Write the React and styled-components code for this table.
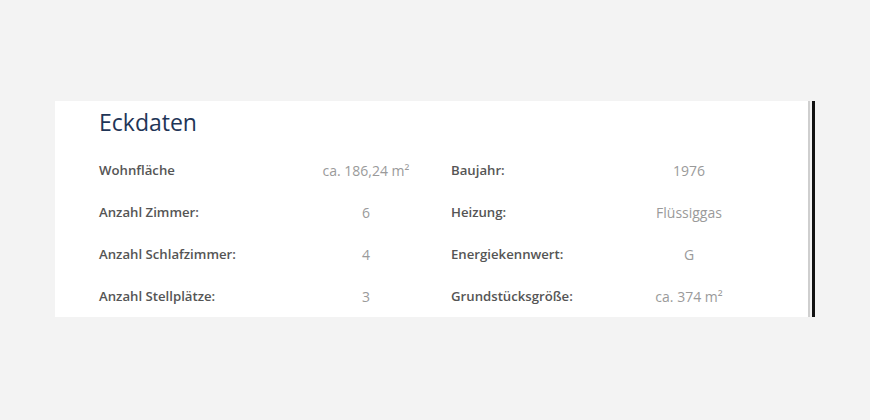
import React from "react";
import styled, { createGlobalStyle } from "styled-components";

const Global = createGlobalStyle`
  html, body { margin: 0; padding: 0; background: #f3f3f3; }
  body { font-family: "Open Sans", "Liberation Sans", sans-serif; }
`;

const Page = styled.div`
  width: 870px;
  height: 420px;
  padding-top: 101px;
  padding-left: 55px;
  box-sizing: border-box;
  display: flex;
  align-items: flex-start;
`;

const Frame = styled.div`
  display: flex;
  align-items: stretch;
`;

const Panel = styled.section`
  width: 755px;
  height: 216px;
  box-sizing: border-box;
  background: #ffffff;
  padding: 4px 0 0 44px;
  border-right: 2px solid #cfcfcf;
`;

const Edge = styled.div`
  width: 3px;
  margin-left: 2px;
  background: #111;
`;

const Title = styled.h2`
  margin: 0 0 10px;
  font-size: 23px;
  line-height: 34px;
  font-weight: 400;
  color: #1f3557;
`;

const Grid = styled.div`
  display: grid;
  grid-template-columns: 182px 170px 182px 112px;
  grid-auto-rows: 42px;
  align-items: center;
`;

const Label = styled.div`
  font-size: 13.2px;
  font-weight: 600;
  color: #555555;
`;

const Value = styled.div`
  font-size: 14px;
  font-weight: 400;
  color: #9a9a9a;
  text-align: center;
`;

const rows = [
  ["Wohnfläche", "ca. 186,24 m²", "Baujahr:", "1976"],
  ["Anzahl Zimmer:", "6", "Heizung:", "Flüssiggas"],
  ["Anzahl Schlafzimmer:", "4", "Energiekennwert:", "G"],
  ["Anzahl Stellplätze:", "3", "Grundstücksgröße:", "ca. 374 m²"],
];

export default function App() {
  return (
    <>
      <Global />
      <Page>
        <Frame>
          <Panel>
            <Title>Eckdaten</Title>
            <Grid>
              {rows.map((r) => (
                <React.Fragment key={r[0]}>
                  <Label>{r[0]}</Label>
                  <Value>{r[1]}</Value>
                  <Label>{r[2]}</Label>
                  <Value>{r[3]}</Value>
                </React.Fragment>
              ))}
            </Grid>
          </Panel>
          <Edge />
        </Frame>
      </Page>
    </>
  );
}
